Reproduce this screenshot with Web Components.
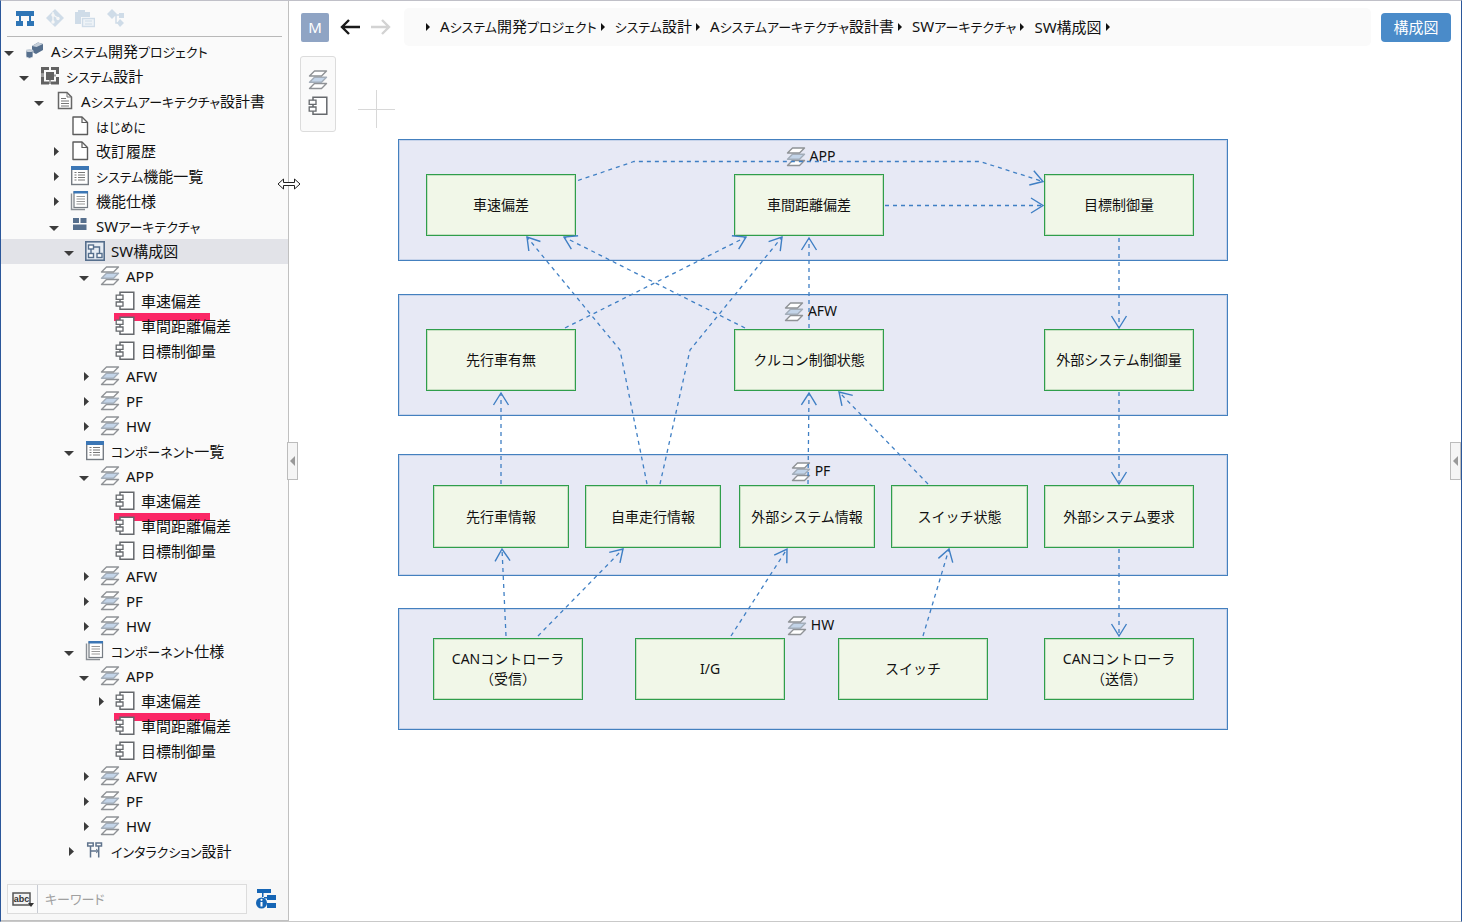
<!DOCTYPE html>
<html lang="ja">
<head>
<meta charset="utf-8">
<meta name="viewport" content="width=device-width, initial-scale=1">
<title>SW構成図</title>
<style>
  body {
    margin: 0;
    font: 15px/23px "Noto Sans", "Noto Sans CJK JP", sans-serif;
    color: #111;
    background: #fff;
  }
</style>
</head>
<body>
<app-shell>
  <side-panel slot="side"></side-panel>
  <top-bar slot="main"></top-bar>
  <diagram-canvas slot="main"></diagram-canvas>
</app-shell>

<script>
const ICONS = {
  layers: `<g stroke="#8f9296" stroke-width="1.4" stroke-linejoin="round"><path d="M6.5 13.5H18.5L13.5 18.5H1.5Z" fill="#fff"/><path d="M6.5 7.200H18.5L13.5 12.200H1.5Z" fill="#c3d4e8" stroke="#a3adb9"/><path d="M6.5 1H18.5L13.5 6H1.5Z" fill="#fff"/></g>`,
  comp: `<g fill="#fff" stroke="#66696d" stroke-width="1.5"><path d="M5 1.2H18.8V18.3H5Z"/><path d="M1.2 4.2H8V8.4H1.2ZM1.2 11H8V15.2H1.2Z" stroke-width="1.3"/></g>`,
  project: `<path d="M7 5L13 1.500L18 3V9L11 13L7 11Z" fill="#566f8d"/><path d="M7 5L13 1.500L18 3L11.500 6Z" fill="#c7d0da"/><path d="M1 9.500H8V16Q4.500 18.500 1 16Z" fill="#566f8d" stroke="#fafafa" stroke-width=".7"/><ellipse cx="4.500" cy="9.500" rx="3.500" ry="1.500" fill="#c7d0da"/>`,
  system: `<g fill="#626262"><path d="M1 1H9V4H4V7.500H1ZM11 1H19V8H16V4H11ZM1 11H4V15.500H9V18.500H1ZM16 11H19V18.500H11V15.500H16Z"/><rect x="6" y="6" width="8" height="8"/><path d="M9 14H11V18H9ZM1 7.500H4V11H1ZM14 8.500H16V10.500H14Z" opacity=".6"/></g>`,
  book: `<path d="M3.500 1.500H12L16.500 6V17.500H3.500Z" fill="#fff" stroke="#666" stroke-width="1.5"/><path d="M12 1.500V6H16.500M6 7.500H11M6 10H14M6 12.500H14M6 15H14" fill="none" stroke="#777"/>`,
  page: `<path d="M3 1H12L17.500 6.500V18.500H3Z" fill="#fff" stroke="#5c5c5c" stroke-width="1.4" stroke-linejoin="round"/><path d="M12 1V6.500H17.500" fill="none" stroke="#5c5c5c" stroke-width="1.2"/>`,
  list: `<rect x="1.700" y="1" width="16.600" height="17.500" fill="#fff" stroke="#767c83" stroke-width="1.4"/><rect x="1" y="0" width="18" height="4" fill="#3b76b5"/><path d="M4.500 6.500H6.500M4.500 9H6.500M4.500 11.500H6.500M4.500 14H6.500M8 6.500H15M8 9H15M8 11.500H15M8 14H15" stroke="#777"/>`,
  spec: `<path d="M1.500 2.500V18.500H15" fill="none" stroke="#8a8f95" stroke-width="1.4"/><rect x="4" y="1" width="13.500" height="15.500" fill="#fff" stroke="#767c83" stroke-width="1.2"/><rect x="3.500" y="0" width="14.500" height="2.500" fill="#3b76b5"/><path d="M6.500 5.500H15M6.500 8H15M6.500 10.500H15M6.500 13H15" stroke="#999"/>`,
  arch: `<g fill="#566f8d"><rect x="3" y="2" width="6" height="5"/><rect x="10.500" y="2" width="6" height="5"/><rect x="3" y="8.500" width="13.500" height="5.500"/></g>`,
  diagram: `<rect x=".8" y=".8" width="18.400" height="18.400" fill="#e6ecf3" stroke="#566f8d" stroke-width="1.6"/><g fill="#fff" stroke="#566f8d" stroke-width="1.4"><rect x="3.500" y="4" width="5" height="4"/><rect x="3.500" y="12.500" width="5" height="4"/><rect x="12" y="12.500" width="5" height="4"/></g><path d="M8.500 6H14.500V12.500M6 8V12.500" fill="none" stroke="#566f8d" stroke-width="1.4"/>`,
  interaction: `<g fill="#fff" stroke="#5f738c" stroke-width="1.5"><rect x="2.700" y="2" width="5.500" height="3"/><rect x="11" y="2" width="5.500" height="3"/><path d="M5.500 5V16.500M13.700 5V16.500M5.500 10H13.700" fill="none"/></g><path d="M11 8L13.500 10L11 12" fill="none" stroke="#6d7f95"/>`
};

const define = (name, render) => customElements.define(name, class extends HTMLElement {
  constructor() {
    super();
    this.attachShadow({ mode: "open" });
  }
  connectedCallback() {
    if (!this.shadowRoot.firstChild) this.shadowRoot.innerHTML = render(this);
  }
});

/* Interface labels set their kana a little smaller than the kanji. */
const KANA = `.kana { font-size: 13px }`;
const withKana = text => text.replace(/[\u3041-\u30ff]+/g, run => `<span class="kana">${run}</span>`);

/* 20 x 20 glyph taken from ICONS */
define("ui-icon", el => `
  <style>:host { display: block; width: 20px; height: 20px; flex: none } svg { display: block }</style>
  <svg width="20" height="20" viewBox="0 0 20 20" aria-hidden="true">${ICONS[el.getAttribute("name")]}</svg>`);

define("app-shell", () => `
  <style>
    :host { display: grid; grid-template-columns: 287px minmax(0, 1fr); min-height: 100vh; box-sizing: border-box;
      border: 1px solid #2b579a; border-top-color: #c0c0c8; border-bottom-color: #c9c9c9; position: relative }
    main { display: flex; flex-direction: column; border-left: 1px solid #c0c0c0; min-width: 0 }
    aside { display: flex; min-width: 0 }
    .handle { position: absolute; top: calc(50% - 19px); width: 11px; height: 38px; padding: 0; box-sizing: border-box;
      border: 1px solid #bcbcbc; background: #f5f5f5; z-index: 2 }
    .handle svg { display: block; margin: auto }
    .left { left: 286px }
    .right { right: 0 }
    .cursor { position: absolute; left: 276px; top: 177px; z-index: 3 }
    ::slotted(side-panel) { flex: 1; min-width: 0 }
    ::slotted(diagram-canvas) { flex: 1 }
  </style>
  <aside><slot name="side"></slot></aside>
  <main><slot name="main"></slot></main>
  <button class="handle left" aria-label="サイドパネルを閉じる"><svg width="5" height="10"><path d="M5 0V10L0 5Z" fill="#999"/></svg></button>
  <button class="handle right" aria-label="右パネルを開く"><svg width="5" height="10"><path d="M5 0V10L0 5Z" fill="#999"/></svg></button>
  <svg class="cursor" width="24" height="12" viewBox="0 0 24 12" aria-hidden="true"><path d="M1 6L6.500 1V4.500H17.500V1L23 6L17.500 11V7.500H6.500V11Z" fill="#fff" stroke="#222"/></svg>`);

define("side-panel", () => `
  <style>
    :host { display: flex; flex-direction: column; background: #fafafa }
    .tools { display: flex; gap: 10px; height: 35px; align-items: center; margin: 0 6px 2px; padding-left: 8px;
      border-bottom: 1px solid #b8b8b8 }
    button { display: flex; padding: 0; border: 0; background: none }
    nav { flex: 1 }
    form { display: flex; align-items: center; gap: 8px; height: 38px; padding: 0 11px 2px 6px; background: #f7f7f7; border-bottom: 1px solid #c0c0c0 }
    .box { display: flex; flex: 1; min-width: 0; height: 30px; box-sizing: border-box; border: 1px solid #dcdcdc; background: #fafafa }
    .mode { width: 30px; align-items: center; justify-content: center; border-right: 1px solid #c8ccd4 }
    input { flex: 1; min-width: 0; border: 0; padding: 0 7px; background: none; outline: 0; color: #111;
      font: 13px "Noto Sans", "Noto Sans CJK JP", sans-serif; font-feature-settings: "palt" }
    input::placeholder { color: #a0a0a0; opacity: 1 }
  </style>
  <div class="tools">
    <button aria-label="構造"><svg width="20" height="20" viewBox="0 0 20 20" fill="#2e75b6"><path d="M1 2H19V7H1ZM1 12H8V17H1ZM12 12H19V17H12ZM4 7H6V12H4ZM14 7H16V12H14Z"/></svg></button>
    <button aria-label="Git"><svg width="20" height="20" viewBox="0 0 20 20"><path d="M10 0L19 9L10 18L1 9Z" fill="#cfdce8"/><path d="M8 3V13M8 6L13 9" stroke="#f7f7f7" stroke-width="1.3"/><circle cx="8" cy="13" r="1.700" fill="#f7f7f7"/><circle cx="13" cy="9.500" r="1.700" fill="#f7f7f7"/><circle cx="8" cy="6" r="1.700" fill="#f7f7f7"/></svg></button>
    <button aria-label="フォルダー"><svg width="20" height="20" viewBox="0 0 20 20"><path d="M0 3H3V1H10V3H15V8H6V15H0Z" fill="#cfdce8"/><rect x="7.500" y="9.500" width="12" height="8" fill="#eef3f7" stroke="#cfdce8" stroke-width="1.400"/><path d="M10 12H17M10 15H17" stroke="#cfdce8"/></svg></button>
    <button aria-label="関連"><svg width="20" height="20" viewBox="0 0 20 20"><path d="M7 0L12 5L7 10L2 5Z" fill="#cfdce8"/><path d="M10 6H14M11 6V14H13" fill="none" stroke="#cfdce8" stroke-width="1.500"/><rect x="14" y="4" width="5" height="5" fill="#cfdce8"/><path d="M15 10L19 14L15 18L12 14Z" fill="#cfdce8"/></svg></button>
  </div>
  <nav aria-label="プロジェクトツリー"><project-tree></project-tree></nav>
  <form onsubmit="return false">
    <div class="box">
      <button class="mode" type="button" aria-label="検索モード"><svg width="22" height="18" viewBox="0 0 22 18"><rect x="1" y="3" width="17" height="12" fill="#f2f2f2" stroke="#555" stroke-width="1.500"/><text x="9.500" y="12" text-anchor="middle" font-family="Liberation Sans" font-weight="700" font-size="9" fill="#333">abc</text><path d="M16 13H22L19 17Z" fill="#333"/></svg></button>
      <input type="text" placeholder="キーワード" aria-label="キーワード">
    </div>
    <button type="button" aria-label="詳細検索"><svg width="22" height="22" viewBox="0 0 22 22"><g fill="#1565b5"><path d="M2 1H16V5H2ZM12 7H21V12H12ZM12 15H21V20H12Z"/><path d="M7 5H8.500V9H7ZM9 9H13V10.500H9Z"/><circle cx="6.500" cy="15" r="5.500"/></g><path d="M6.500 14V18.500" stroke="#fff" stroke-width="2"/><circle cx="6.500" cy="11.800" r="1.100" fill="#fff"/></svg></button>
  </form>`);

/* level, state (open / closed / leaf), icon, label, flags */
const GROUPS = [[5, "closed", "layers", "AFW"], [5, "closed", "layers", "PF"], [5, "closed", "layers", "HW"]];
const appGroup = first => [
  [5, "open", "layers", "APP"],
  [6, first, "comp", "車速偏差", "marked"],
  [6, "leaf", "comp", "車間距離偏差"],
  [6, "leaf", "comp", "目標制御量"],
  ...GROUPS
];
const TREE = [
  [0, "open", "project", "Aシステム開発プロジェクト"],
  [1, "open", "system", "システム設計"],
  [2, "open", "book", "Aシステムアーキテクチャ設計書"],
  [3, "leaf", "page", "はじめに"],
  [3, "closed", "page", "改訂履歴"],
  [3, "closed", "list", "システム機能一覧"],
  [3, "closed", "spec", "機能仕様"],
  [3, "open", "arch", "SWアーキテクチャ"],
  [4, "open", "diagram", "SW構成図", "selected"],
  ...appGroup("leaf"),
  [4, "open", "list", "コンポーネント一覧"],
  ...appGroup("leaf"),
  [4, "open", "spec", "コンポーネント仕様"],
  ...appGroup("closed"),
  [4, "closed", "interaction", "インタラクション設計"]
];

define("project-tree", () => `
  <style>:host { display: block } ${KANA}</style>
  <div role="tree">${TREE.map(([level, state, icon, label, flag = ""]) =>
    `<tree-row role="treeitem" aria-level="${level + 1}" style="--level:${level}" state="${state}" ${flag}><ui-icon slot="icon" name="${icon}"></ui-icon>${withKana(label)}</tree-row>`).join("")}</div>`);

define("tree-row", el => `
  <style>
    :host { display: flex; align-items: center; height: 25px; padding-left: calc(var(--level) * 15px); position: relative;
      line-height: 25px; font-feature-settings: "palt"; white-space: nowrap }
    :host([selected]) { background: #e2e3e8 }
    :host([marked])::after { content: ""; position: absolute; left: 113px; top: 24px; width: 96px; height: 8px; background: #fb2766 }
    button { width: 18px; height: 16px; margin-right: 6px; padding: 0; border: 0; background: none; display: flex }
    ::slotted(ui-icon) { margin-bottom: 1px }
    .label { margin-left: 6px }
  </style>
  <button aria-label="開閉" ${el.getAttribute("state") === "leaf" ? "tabindex=-1" : ""}><svg width="18" height="16" viewBox="0 0 18 16"><path d="${{
    open: "M3 7H13L8 12Z", closed: "M8 3V12L13 7.500Z", leaf: "" }[el.getAttribute("state")]}" fill="#3c3c3c"/></svg></button>
  <slot name="icon"></slot><span class="label"><slot></slot></span>`);

define("top-bar", () => `
  <style>
    :host { display: flex; align-items: center; height: 38px; padding: 7px 10px 10px 12px }
    button { font: inherit; border: 0; padding: 0; color: #fff; flex: none }
    .m { width: 28px; height: 29px; border-radius: 2px; background: #8fa4c4 }
    .arrow { display: flex; background: none; margin-left: 11px }
    nav { display: flex; align-items: center; flex: 1; min-width: 0; height: 38px; margin: 0 10px 0 13px; padding-left: 22px;
      border-radius: 5px; background: #fafafa; font-feature-settings: "palt"; white-space: nowrap; box-sizing: border-box }
    a { color: #111; text-decoration: none; margin: 0 4px 0 9px }
    nav svg { flex: none }
    .view { width: 70px; height: 29px; border-radius: 4px; background: #4a8bc9 }
    ${KANA}
  </style>
  <button class="m" aria-label="モデル">M</button>
  <button class="arrow" aria-label="戻る"><svg width="20" height="16"><path d="M20 8H2M9 1L2 8L9 15" fill="none" stroke="#1a1a1a" stroke-width="2.400"/></svg></button>
  <button class="arrow" aria-label="進む"><svg width="20" height="16"><path d="M0 8H18M11 1L18 8L11 15" fill="none" stroke="#d3d3d3" stroke-width="2.400"/></svg></button>
  <nav aria-label="パンくず">${["Aシステム開発プロジェクト", "システム設計", "Aシステムアーキテクチャ設計書", "SWアーキテクチャ", "SW構成図"].map(t =>
    `<svg width="5" height="8"><path d="M0 0V8L4 4Z" fill="#111"/></svg><a href="#">${withKana(t)}</a>`).join("")}<svg width="5" height="8"><path d="M0 0V8L4 4Z" fill="#111"/></svg></nav>
  <button class="view">構成図</button>`);

const ORIGIN = { x: 289, y: 56 };
const LAYERS = [["APP", 139], ["AFW", 294], ["PF", 454], ["HW", 608]];
const NODES = [
  ["車速偏差", 426, 174, 150, 62], ["車間距離偏差", 734, 174, 150, 62], ["目標制御量", 1044, 174, 150, 62],
  ["先行車有無", 426, 329, 150, 62], ["クルコン制御状態", 734, 329, 150, 62], ["外部システム制御量", 1044, 329, 150, 62],
  ["先行車情報", 433, 485, 136, 63], ["自車走行情報", 585, 485, 136, 63], ["外部システム情報", 739, 485, 136, 63],
  ["スイッチ状態", 891, 485, 137, 63], ["外部システム要求", 1044, 485, 150, 63],
  ["CANコントローラ<br>（受信）", 433, 638, 150, 62], ["I/G", 635, 638, 150, 62], ["スイッチ", 838, 638, 150, 62],
  ["CANコントローラ<br>（送信）", 1044, 638, 150, 62]
];
const EDGES = [
  "578,180.5 634,161.5 980,161.5 1043,181.5", "885,205.5 1043,205.5", "1119,238 1119,328", "1119,392 1119,484",
  "1119,549 1119,636", "809,328 809,238", "745,328 564,237", "565,328 746,237", "647,484 620,350 527,237",
  "660,484 690,350 782,237", "501,484 501,393", "808,484 809,393", "928,484 839,392", "506,636 502,549",
  "538,636 623,549", "731,636 787,549", "923,636 949,549"
];
const at = (x, y) => `left:${x - ORIGIN.x}px;top:${y - ORIGIN.y}px`;

define("diagram-canvas", () => `
  <style>
    :host { display: block; position: relative; min-height: 680px; overflow: hidden }
    .palette { display: flex; flex-direction: column; align-items: center; gap: 6px; width: 34px; box-sizing: content-box;
      height: 51px; padding: 13px 0 10px; margin-left: 11px; border: 1px solid #dcdcdc; border-radius: 3px; background: #fafafa }
    .palette button { border: 0; padding: 0; background: none }
    layer-box, node-box, .edges { position: absolute }
    layer-box { width: 830px; height: 122px }
    .edges { left: 0; top: 0; pointer-events: none }
  </style>
  <div class="palette">
    <button aria-label="レイヤー"><ui-icon name="layers"></ui-icon></button>
    <button aria-label="コンポーネント"><ui-icon name="comp"></ui-icon></button>
  </div>
  ${LAYERS.map(([t, y]) => `<layer-box style="${at(398, y)}">${t}</layer-box>`).join("")}
  ${NODES.map(([t, x, y, w, h]) => `<node-box style="${at(x, y)};width:${w}px;height:${h}px">${t}</node-box>`).join("")}
  <svg class="edges" width="960" height="680" viewBox="${ORIGIN.x} ${ORIGIN.y} 960 680" aria-hidden="true">
    <defs><marker id="head" markerUnits="userSpaceOnUse" markerWidth="16" markerHeight="20" refX="13" refY="10" orient="auto"><path d="M1 2.500L13 10L1 17.500" fill="none" stroke="#3f7fc4" stroke-width="1.400"/></marker></defs>
    <path d="M358 109.500H395M376.500 90V128" stroke="#d8d8d8"/>
    <g fill="none" stroke="#3f7fc4" stroke-width="1.300" stroke-dasharray="4 4">${EDGES.map(p => `<polyline points="${p}" marker-end="url(#head)"/>`).join("")}</g>
  </svg>`);

define("layer-box", () => `
  <style>
    :host { display: flex; justify-content: center; align-items: flex-start; gap: 4px; box-sizing: border-box; padding: 7px 5px 0 0;
      border: 1px solid #4480bf; box-shadow: inset 0 0 0 1px #c6d3ea; background: #e7e9f5; font-size: 14px; line-height: 18px }
  </style>
  <ui-icon name="layers"></ui-icon><slot></slot>`);

define("node-box", () => `
  <style>
    :host { display: flex; justify-content: center; align-items: center; box-sizing: border-box; text-align: center;
      border: 1px solid #2f9e4b; box-shadow: inset 0 0 0 1px #c6e0c2; background: #f1f7e8; font-size: 14px; line-height: 20px; white-space: nowrap }
  </style>
  <span><slot></slot></span>`);
</script>
</body>
</html>
